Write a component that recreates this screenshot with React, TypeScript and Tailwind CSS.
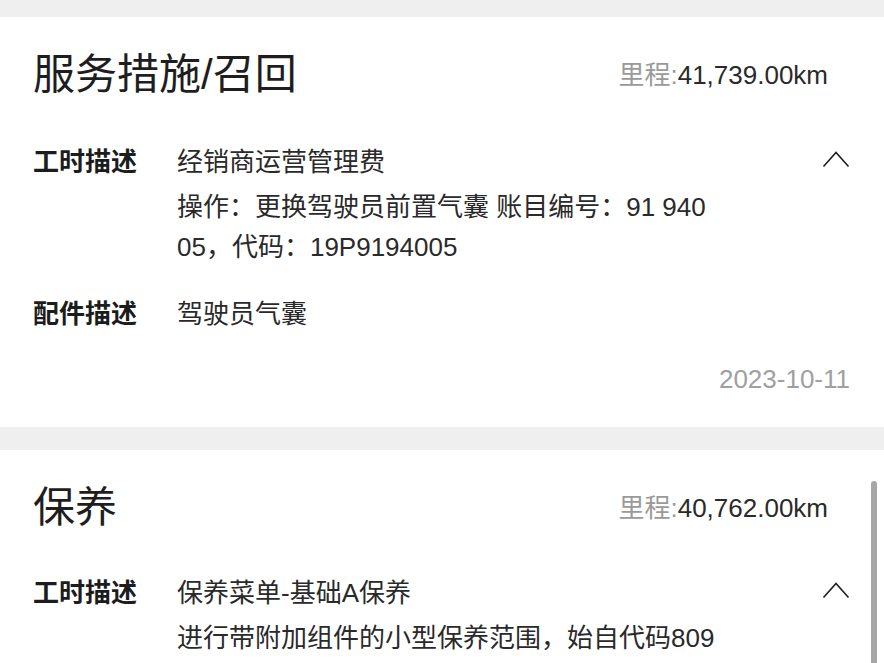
const font = '[font-family:"Liberation_Sans","Noto_Sans_CJK_SC",sans-serif]';

function ChevronUp() {
  return (
    <svg width="28" height="17" viewBox="0 0 28 17" fill="none" stroke="#1f1f1f" strokeWidth={1.6} aria-hidden="true">
      <path d="M1.5 15.5 L14 1.5 L26.5 15.5" />
    </svg>
  );
}

function Mileage({ value }: { value: string }) {
  return (
    <div className="text-[26px] leading-none text-[#2a2a2a]">
      <span className="text-[#9a9a9a]">里程:</span>
      {value}
    </div>
  );
}

interface Row {
  label: string;
  lines: string[];
  toggle?: boolean;
}

function DetailRow({ row }: { row: Row }) {
  return (
    <div className="flex items-start">
      <div className="w-[144px] shrink-0 text-[26px] leading-[40px] font-bold text-[#1c1c1c]">{row.label}</div>
      <div className="flex-1 text-[26px] leading-[40px] text-[#2a2a2a]">
        {row.lines.map((l, i) => (
          <div key={i} className={i === 1 ? 'mt-[5px]' : ''}>
            {l}
          </div>
        ))}
      </div>
      {row.toggle ? (
        <div className="w-[40px] pt-[9px] flex justify-end">
          <ChevronUp />
        </div>
      ) : null}
    </div>
  );
}

export default function App() {
  return (
    <div className={`relative w-[884px] h-[663px] overflow-hidden bg-[#efefef] ${font}`}>
      <div className="h-[17px]" />

      <section className="bg-white h-[410px] pl-[33px] pr-[34px]">
        <div className="flex items-center justify-between pt-[34px] pr-[22px]">
          <h2 className="text-[42px] leading-[48px] font-normal text-[#1e1e1e]">服务措施/召回</h2>
          <Mileage value="41,739.00km" />
        </div>
        <div className="mt-[43px]">
          <DetailRow
            row={{
              label: '工时描述',
              lines: ['经销商运营管理费', '操作：更换驾驶员前置气囊 账目编号：91 940', '05，代码：19P9194005'],
              toggle: true,
            }}
          />
        </div>
        <div className="mt-[27px]">
          <DetailRow row={{ label: '配件描述', lines: ['驾驶员气囊'] }} />
        </div>
        <div className="mt-[32px] text-right text-[26px] leading-none text-[#a0a0a0]">2023-10-11</div>
      </section>

      <div className="h-[23px]" />

      <section className="bg-white h-[300px] pl-[33px] pr-[34px]">
        <div className="flex items-center justify-between pt-[34px] pr-[22px]">
          <h2 className="text-[42px] leading-[48px] font-normal text-[#1e1e1e]">保养</h2>
          <Mileage value="40,762.00km" />
        </div>
        <div className="mt-[41px]">
          <DetailRow
            row={{
              label: '工时描述',
              lines: ['保养菜单-基础A保养', '进行带附加组件的小型保养范围，始自代码809'],
              toggle: true,
            }}
          />
        </div>
      </section>

      <div className="absolute left-[871px] top-[481px] w-[6px] h-[200px] rounded-full bg-[#a6a6a6]" />
    </div>
  );
}
